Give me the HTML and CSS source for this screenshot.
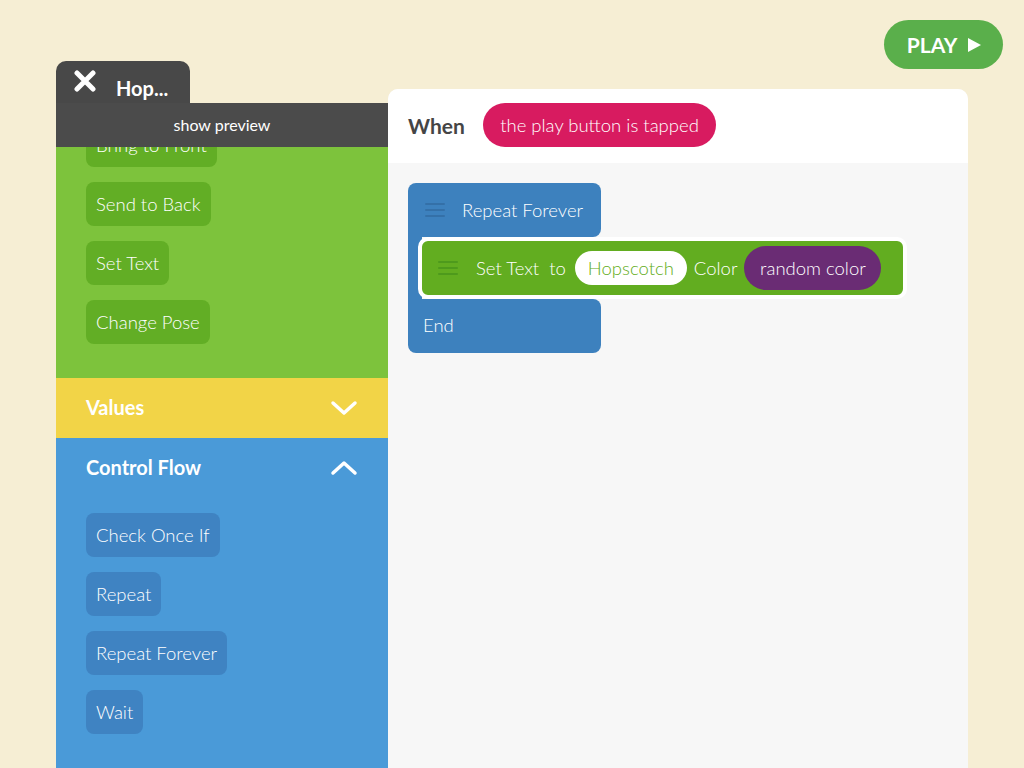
FILE: index.html
```html
<!DOCTYPE html>
<html>
<head>
<meta charset="utf-8">
<link rel="stylesheet" href="styles.css">
</head>
<body>
<div class="app">
  <aside class="sidebar">
    <div class="tab">
      <svg class="close" width="22" height="22" viewBox="0 0 22 22"><path d="M3 3 L19 19 M19 3 L3 19" stroke="#fff" stroke-width="5" stroke-linecap="round"/></svg>
      <span class="tab-title">Hop...</span>
    </div>
    <div class="preview-bar">show preview</div>
    <section class="cat cat-looks">
      <div class="cat-list scrolled">
        <div class="blk">Bring to Front</div>
        <div class="blk">Send to Back</div>
        <div class="blk">Set Text</div>
        <div class="blk">Change Pose</div>
      </div>
    </section>
    <section class="cat-head cat-values">
      <span>Values</span>
      <svg width="28" height="16" viewBox="0 0 28 16"><path d="M3 3 L14 13 L25 3" fill="none" stroke="#fff" stroke-width="3.5" stroke-linecap="round" stroke-linejoin="round"/></svg>
    </section>
    <section class="cat cat-control">
      <div class="cat-head">
        <span>Control Flow</span>
        <svg width="28" height="16" viewBox="0 0 28 16"><path d="M3 13 L14 3 L25 13" fill="none" stroke="#fff" stroke-width="3.5" stroke-linecap="round" stroke-linejoin="round"/></svg>
      </div>
      <div class="cat-list">
        <div class="blk">Check Once If</div>
        <div class="blk">Repeat</div>
        <div class="blk">Repeat Forever</div>
        <div class="blk">Wait</div>
      </div>
    </section>
  </aside>
  <main class="right">
    <div class="topbar">
      <button class="play">PLAY <svg width="15" height="16" viewBox="0 0 15 16"><path d="M1 1 L14 8 L1 15 Z" fill="#fff"/></svg></button>
    </div>
    <div class="canvas">
      <div class="canvas-head">
        <span class="when">When</span>
        <span class="event">the play button is tapped</span>
      </div>
      <div class="canvas-body">
        <div class="cblock">
          <div class="c-head">
            <span class="burger blue-burger"><i></i><i></i><i></i></span>
            <span>Repeat Forever</span>
          </div>
          <div class="c-mid">
            <div class="set-block">
              <span class="burger green-burger"><i></i><i></i><i></i></span>
              <span class="lbl">Set Text</span>
              <span class="lbl to">to</span>
              <span class="pill-white">Hopscotch</span>
              <span class="lbl color">Color</span>
              <span class="pill-purple">random color</span>
            </div>
          </div>
          <div class="c-foot">End</div>
        </div>
      </div>
    </div>
  </main>
</div>
</body>
</html>
```
FILE: styles.css
```css
* { box-sizing: border-box; }
html, body { margin: 0; padding: 0; }
body {
  width: 1024px;
  height: 768px;
  overflow: hidden;
  background: #f6eed4;
  font-family: Lato, "Open Sans", sans-serif;
  font-weight: 300;
  color: #fff;
}
.app {
  display: flex;
  padding-left: 56px;
  height: 768px;
}
.sidebar {
  width: 332px;
  margin-top: 61px;
  display: flex;
  flex-direction: column;
}
.tab {
  width: 134px;
  height: 42px;
  background: #484848;
  border-radius: 10px 10px 0 0;
  display: flex;
  align-items: center;
  padding-left: 18px;
}
.close { margin-top: -2px; }
.tab-title {
  font-weight: 700;
  font-size: 20px;
  margin-left: 20px;
  margin-top: 11px;
}
.preview-bar {
  height: 44px;
  background: #4b4b4b;
  font-size: 16px;
  font-weight: 400;
  display: flex;
  align-items: center;
  justify-content: center;
  padding-bottom: 2px;
  position: relative;
  z-index: 2;
}
.cat-looks {
  background: #7dc33c;
  height: 231px;
  overflow: hidden;
}
.cat-list {
  display: flex;
  flex-direction: column;
  align-items: flex-start;
  gap: 15px;
  padding-left: 30px;
}
.scrolled { margin-top: -24px; }
.blk {
  height: 44px;
  padding: 0 10px 1px 10px;
  border-radius: 8px;
  font-size: 18.5px;
  display: flex;
  align-items: center;
}
.cat-looks .blk { background: #62ae25; }
.cat-head {
  height: 60px;
  display: flex;
  align-items: center;
  justify-content: space-between;
  padding: 0 30px 2px 30px;
  font-weight: 700;
  font-size: 20px;
}
.cat-head svg { margin-top: 2px; }
.cat-values { background: #f2d447; }
.cat-control {
  flex: 1;
  background: #4a9ad8;
}
.cat-control .cat-list { margin-top: 15px; }
.cat-control .blk { background: #3f83c2; }

.right {
  width: 636px;
  display: flex;
  flex-direction: column;
}
.topbar {
  display: flex;
  justify-content: flex-end;
  padding: 20px 21px 0 0;
}
.play {
  width: 119px;
  height: 49px;
  border: none;
  border-radius: 25px;
  background: #5aaf4b;
  color: #fff;
  font-family: Lato, "Open Sans", sans-serif;
  font-weight: 700;
  font-size: 21px;
  display: flex;
  align-items: center;
  justify-content: center;
  gap: 10px;
  padding: 0 0 0 2px;
}
.canvas {
  margin-top: 20px;
  width: 580px;
  flex: 1;
  background: #f7f7f7;
  border-radius: 10px 10px 0 0;
  overflow: hidden;
}
.canvas-head {
  height: 74px;
  background: #fff;
  display: flex;
  align-items: center;
  padding: 0 0 2px 20px;
}
.when {
  color: #454545;
  font-weight: 700;
  font-size: 21px;
  width: 75px;
}
.event {
  height: 44px;
  width: 233px;
  border-radius: 22px;
  background: #d81b60;
  font-size: 18.5px;
  display: flex;
  align-items: center;
  justify-content: center;
  padding-bottom: 1px;
}
.canvas-body {
  padding: 20px;
}
.cblock {
  display: flex;
  flex-direction: column;
  align-items: flex-start;
  font-size: 18.5px;
}
.c-head {
  width: 193px;
  height: 54px;
  background: #3d81be;
  border-radius: 8px 8px 8px 0;
  display: flex;
  align-items: center;
  padding: 0 0 1px 17px;
  gap: 17px;
}
.burger {
  display: flex;
  flex-direction: column;
  gap: 4px;
  width: 20px;
}
.burger i {
  display: block;
  height: 2px;
  border-radius: 1px;
}
.blue-burger i { background: #3470a8; }
.green-burger i { background: #4e9a1c; }
.c-mid {
  padding-left: 10px;
  background: linear-gradient(90deg, #3d81be 0 14px, transparent 14px);
}
.set-block {
  height: 62px;
  border: 4px solid #fff;
  border-radius: 10px;
  background: #62ad20;
  display: flex;
  align-items: center;
  padding: 0 22px 1px 16px;
}
.set-block .burger { margin-right: 18px; }
.lbl { white-space: nowrap; }
.to { margin-left: 10px; margin-right: 9px; }
.pill-white {
  height: 34px;
  border-radius: 17px;
  background: #fff;
  color: #62ad20;
  display: flex;
  align-items: center;
  padding: 0 14px;
  width: 112px;
  justify-content: center;
}
.color { margin-left: 7px; margin-right: 7px; }
.pill-purple {
  height: 44px;
  border-radius: 22px;
  background: #6a2c74;
  display: flex;
  align-items: center;
  justify-content: center;
  width: 137px;
}
.c-foot {
  width: 193px;
  height: 54px;
  background: #3d81be;
  border-radius: 0 8px 8px 8px;
  display: flex;
  align-items: center;
  padding: 0 0 2px 15px;
}
```
